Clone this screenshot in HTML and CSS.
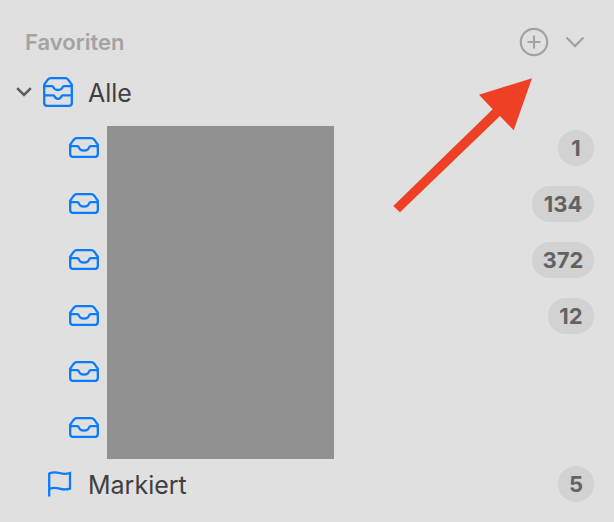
FILE: index.html
```html
<!DOCTYPE html>
<html lang="de">
<head>
    <meta charset="UTF-8">
    <title>Favoriten</title>
    <link rel="stylesheet" href="styles.css">
</head>
<body>
    <svg class="defs" width="0" height="0">
        <symbol id="tray" viewBox="0 0 30 21">
            <path d="M7.5 1.2H22.5Q24 1.2 25 2.4L28.8 7.6V17Q28.8 19.8 26 19.8H4Q1.2 19.8 1.2 17V7.6L5 2.4Q6 1.2 7.5 1.2Z"/>
            <path d="M1.2 9.2H8.4Q9.4 9.2 9.7 10.2Q10.8 13.6 15 13.6Q19.2 13.6 20.3 10.2Q20.6 9.2 21.6 9.2H28.8"/>
        </symbol>
    </svg>

    <div class="sidebar">
        <div class="header">
            <span class="header-title">Favoriten</span>
            <svg class="icon-plus" width="30" height="30" viewBox="0 0 30 30">
                <circle cx="15" cy="15" r="13.2"/>
                <path d="M15 8.5V21.5M8.5 15H21.5"/>
            </svg>
            <svg class="icon-collapse" width="20" height="12" viewBox="0 0 20 12">
                <path d="M1.5 1.5L10 10L18.5 1.5"/>
            </svg>
        </div>

        <div class="row row-parent">
            <svg class="icon-chevron" width="16" height="10" viewBox="0 0 16 10">
                <path d="M1.2 1.2L8 8L14.8 1.2"/>
            </svg>
            <svg class="icon-blue" width="30" height="30" viewBox="0 0 30 30">
                <path d="M7.5 1.2H22.5Q24 1.2 25 2.4L28.8 7.6V26Q28.8 28.8 26 28.8H4Q1.2 28.8 1.2 26V7.6L5 2.4Q6 1.2 7.5 1.2Z"/>
                <path d="M1.2 9.2H9Q10 9.2 10.3 10Q11.3 13 15 13Q18.7 13 19.7 10Q20 9.2 21 9.2H28.8"/>
                <path d="M1.2 18.4H10.5Q11.2 18.4 11.5 19.2Q12.3 21.8 15 21.8Q17.7 21.8 18.5 19.2Q18.8 18.4 19.5 18.4H28.8"/>
            </svg>
            <span class="row-label">Alle</span>
        </div>

        <div class="row row-child">
            <svg class="icon-blue icon-tray" width="30" height="21"><use href="#tray"/></svg>
            <span class="badge">1</span>
        </div>
        <div class="row row-child">
            <svg class="icon-blue icon-tray" width="30" height="21"><use href="#tray"/></svg>
            <span class="badge badge-wide">134</span>
        </div>
        <div class="row row-child">
            <svg class="icon-blue icon-tray" width="30" height="21"><use href="#tray"/></svg>
            <span class="badge badge-wide">372</span>
        </div>
        <div class="row row-child">
            <svg class="icon-blue icon-tray" width="30" height="21"><use href="#tray"/></svg>
            <span class="badge badge-mid">12</span>
        </div>
        <div class="row row-child">
            <svg class="icon-blue icon-tray" width="30" height="21"><use href="#tray"/></svg>
        </div>
        <div class="row row-child">
            <svg class="icon-blue icon-tray" width="30" height="21"><use href="#tray"/></svg>
        </div>

        <div class="row row-flag">
            <svg class="icon-blue icon-flag" width="24" height="26" viewBox="0 0 24 26">
                <path d="M1.2 25.5V2.6C5 0.6 8 1 11.5 2C15 3 18.5 3.2 22 2V17.6C18.5 18.8 15 18.6 11.5 17.6C8 16.6 5 16.4 1.2 18"/>
            </svg>
            <span class="row-label">Markiert</span>
            <span class="badge">5</span>
        </div>

        <div class="redacted"></div>

        <svg class="arrow" width="150" height="145" viewBox="0 0 150 145">
            <polygon points="143,1.3 124.7,53.3 111,39 11,135.3 4.3,129 103.7,32.3 90,17.7"/>
        </svg>
    </div>
</body>
</html>
```

FILE: styles.css
```css
body {
    margin: 0;
    background-color: #e0e0e0;
    font-family: Inter, "Liberation Sans", sans-serif;
}
.defs {
    position: absolute;
}
.sidebar {
    position: relative;
    height: 522px;
    padding: 22px 20px 0 0;
    box-sizing: border-box;
    overflow: hidden;
}
.header {
    display: flex;
    align-items: center;
    height: 40px;
    margin-bottom: 2px;
    padding-left: 25px;
}
.header-title {
    font-size: 22px;
    font-weight: 600;
    color: #a3a3a3;
    margin-right: auto;
}
.icon-plus {
    fill: none;
    stroke: #a3a3a3;
    stroke-width: 2.2;
}
.icon-collapse {
    fill: none;
    stroke: #a3a3a3;
    stroke-width: 2.4;
    margin-left: 16px;
    margin-right: 9px;
}
.row {
    display: flex;
    align-items: center;
    height: 56px;
}
.row-parent {
    padding-left: 16px;
}
.row-child {
    padding-left: 69px;
}
.row-flag {
    padding-left: 48px;
}
.row-parent .row-label {
    margin-left: 15px;
}
.row-flag .row-label {
    margin-left: 16px;
}
.row-label {
    font-size: 25px;
    color: #404040;
    padding-top: 2px;
}
.icon-chevron {
    fill: none;
    stroke: #5c5c5c;
    stroke-width: 2.6;
    margin-right: 11px;
}
.icon-blue {
    fill: none;
    stroke: #0a7aff;
    stroke-width: 2.3;
}
.icon-tray {
    margin-bottom: 2px;
}
.icon-flag {
    margin-bottom: 1px;
}
.badge {
    margin-left: auto;
    width: 36px;
    height: 36px;
    line-height: 36px;
    border-radius: 18px;
    background-color: #d2d2d2;
    color: #636363;
    font-size: 22px;
    font-weight: 700;
    text-align: center;
}
.badge-mid {
    width: 46px;
}
.badge-wide {
    width: 62px;
}
.redacted {
    position: absolute;
    left: 107px;
    top: 126px;
    width: 227px;
    height: 333px;
    background-color: #909090;
}
.arrow {
    position: absolute;
    left: 389px;
    top: 77px;
    fill: #ee4024;
}
```
